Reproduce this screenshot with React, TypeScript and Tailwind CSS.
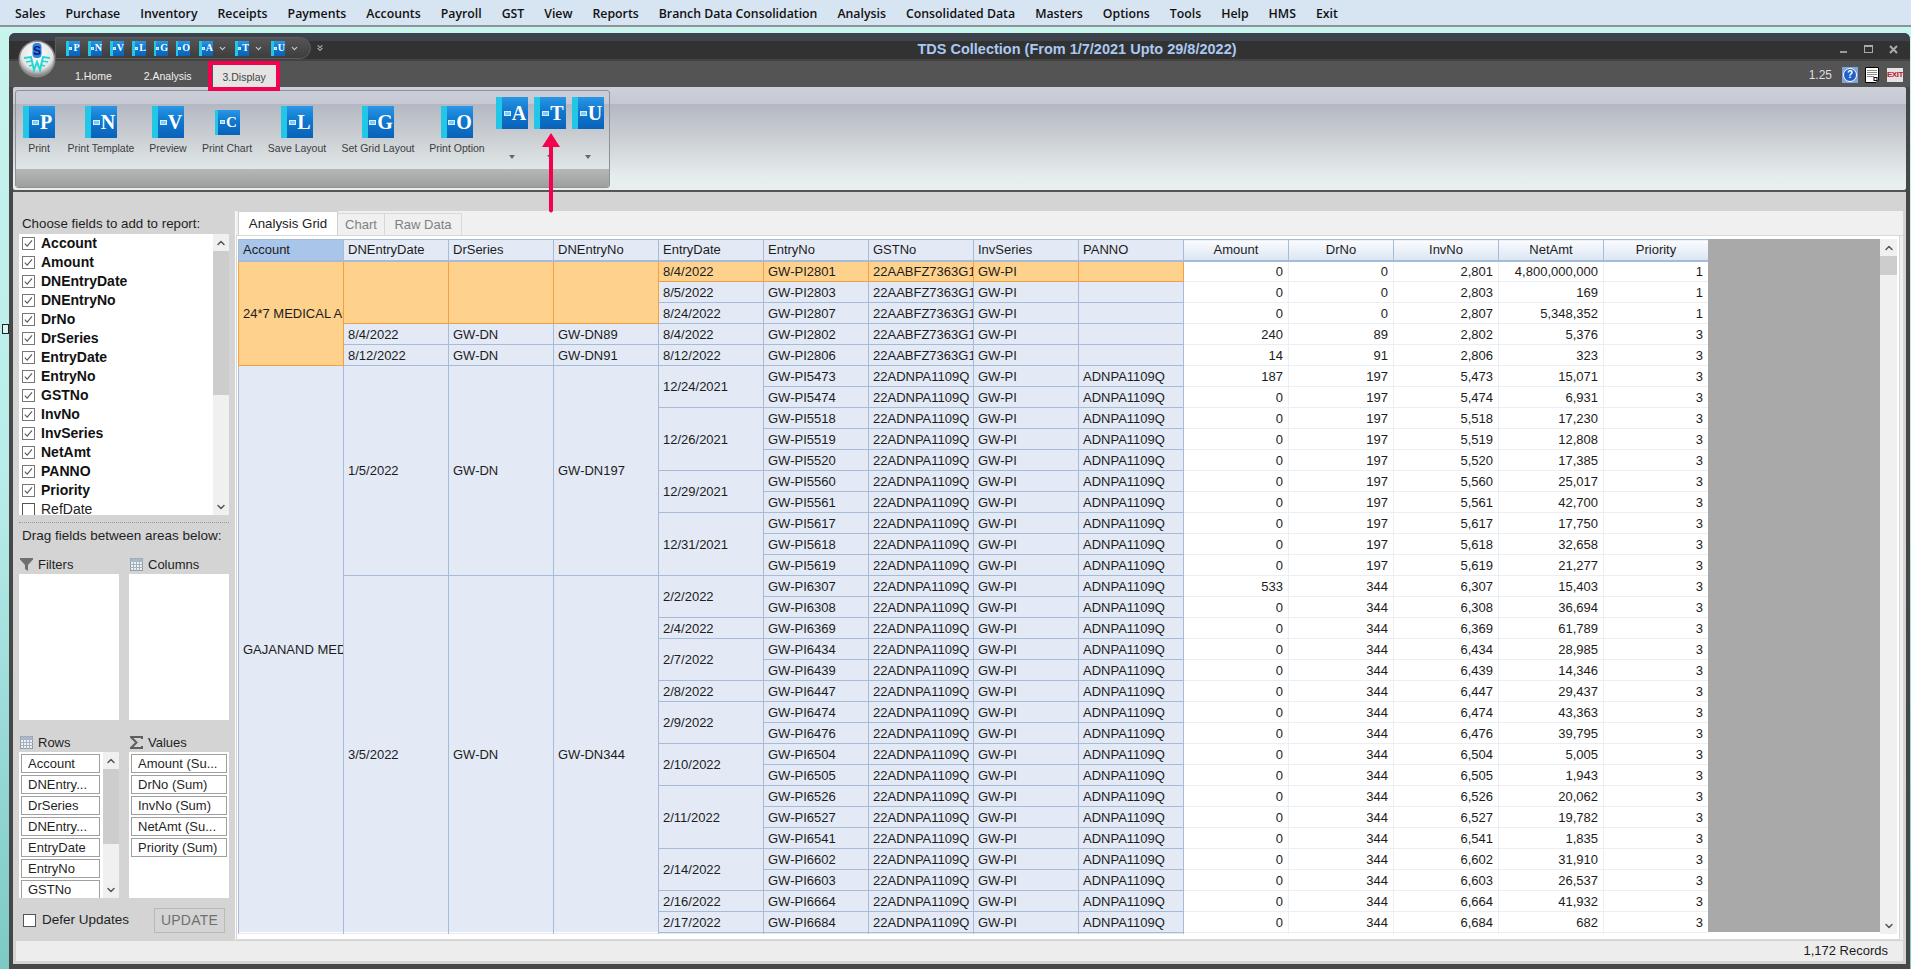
import React from "react";
import { ChevronUp, ChevronDown, ChevronsDown } from "lucide-react";

const menu = ["Sales","Purchase","Inventory","Receipts","Payments","Accounts","Payroll","GST","View","Reports","Branch Data Consolidation","Analysis","Consolidated Data","Masters","Options","Tools","Help","HMS","Exit"];

const fields: [string, boolean][] = [["Account",true],["Amount",true],["DNEntryDate",true],["DNEntryNo",true],["DrNo",true],["DrSeries",true],["EntryDate",true],["EntryNo",true],["GSTNo",true],["InvNo",true],["InvSeries",true],["NetAmt",true],["PANNO",true],["Priority",true],["RefDate",false]];

const rowFields = ["Account","DNEntry...","DrSeries","DNEntry...","EntryDate","EntryNo","GSTNo"];
const valueFields = ["Amount (Su...","DrNo (Sum)","InvNo (Sum)","NetAmt (Su...","Priority (Sum)"];

const rows: string[][] = [
["GW-PI2801","0","0","2,801","4,800,000,000"],
["GW-PI2803","0","0","2,803","169"],
["GW-PI2807","0","0","2,807","5,348,352"],
["GW-PI2802","240","89","2,802","5,376"],
["GW-PI2806","14","91","2,806","323"],
["GW-PI5473","187","197","5,473","15,071"],
["GW-PI5474","0","197","5,474","6,931"],
["GW-PI5518","0","197","5,518","17,230"],
["GW-PI5519","0","197","5,519","12,808"],
["GW-PI5520","0","197","5,520","17,385"],
["GW-PI5560","0","197","5,560","25,017"],
["GW-PI5561","0","197","5,561","42,700"],
["GW-PI5617","0","197","5,617","17,750"],
["GW-PI5618","0","197","5,618","32,658"],
["GW-PI5619","0","197","5,619","21,277"],
["GW-PI6307","533","344","6,307","15,403"],
["GW-PI6308","0","344","6,308","36,694"],
["GW-PI6369","0","344","6,369","61,789"],
["GW-PI6434","0","344","6,434","28,985"],
["GW-PI6439","0","344","6,439","14,346"],
["GW-PI6447","0","344","6,447","29,437"],
["GW-PI6474","0","344","6,474","43,363"],
["GW-PI6476","0","344","6,476","39,795"],
["GW-PI6504","0","344","6,504","5,005"],
["GW-PI6505","0","344","6,505","1,943"],
["GW-PI6526","0","344","6,526","20,062"],
["GW-PI6527","0","344","6,527","19,782"],
["GW-PI6541","0","344","6,541","1,835"],
["GW-PI6602","0","344","6,602","31,910"],
["GW-PI6603","0","344","6,603","26,537"],
["GW-PI6664","0","344","6,664","41,932"],
["GW-PI6684","0","344","6,684","682"],
];

const entryDates: Record<number, [string, number]> = {
  0:["8/4/2022",1],1:["8/5/2022",1],2:["8/24/2022",1],3:["8/4/2022",1],4:["8/12/2022",1],
  5:["12/24/2021",2],7:["12/26/2021",3],10:["12/29/2021",2],12:["12/31/2021",3],
  15:["2/2/2022",2],17:["2/4/2022",1],18:["2/7/2022",2],20:["2/8/2022",1],21:["2/9/2022",2],
  23:["2/10/2022",2],25:["2/11/2022",3],28:["2/14/2022",2],30:["2/16/2022",1],31:["2/17/2022",1],
};

const cellBase = "border border-[#a6bcd6] bg-[#e3eaf6] pl-[4px] pr-0 py-0 overflow-hidden whitespace-nowrap text-[#1c1c1c]";
const orangeCell = "border border-[#f3a044] bg-[#fed28c] pl-[4px] pr-0 py-0 overflow-hidden whitespace-nowrap text-[#1c1c1c]";
const valueCell = "border border-[#ebeef3] bg-white pl-0 pr-[5px] py-0 text-right overflow-hidden whitespace-nowrap text-[#1c1c1c]";

function Book({ letter, size }: { letter: string; size: "qat" | "big" | "mid" | "small" }) {
  const box = size === "qat" ? "w-[14px] h-[15px]" : size === "mid" ? "w-[25px] h-[25px]" : "w-[32px] h-[32px]";
  const spine = size === "qat" ? "w-[3px]" : size === "mid" ? "w-[3px]" : "w-[6px]";
  const sq = size === "qat" ? "w-[3px] h-[3px]" : size === "mid" ? "w-[5px] h-[4px]" : "w-[7px] h-[5px]";
  const txt = size === "qat" ? "text-[10px]" : size === "mid" ? "text-[15px]" : "text-[20px]";
  return (
    <div className={`flex shrink-0 ${box}`}>
      <div className={`${spine} bg-[#22c6e6]`} />
      <div className="flex-1 flex items-center justify-center gap-px bg-[linear-gradient(180deg,#2a96e4_0%,#0f78d0_45%,#0a62b8_100%)]">
        <span className={`${sq} bg-[#7cc8f4] border border-[#d6eefc]`} />
        <span className={`font-['Liberation_Serif',serif] font-bold leading-none text-white ${txt}`}>{letter}</span>
      </div>
    </div>
  );
}

function BigBtn({ letter, label, w, mid }: { letter: string; label: string; w: string; mid?: boolean }) {
  return (
    <div className={`flex flex-col items-center pt-[15px] shrink-0 ${w}`}>
      <div className="h-[32px] flex items-center">
        <Book letter={letter} size={mid ? "mid" : "big"} />
      </div>
      <div className="mt-[3px] h-[14px] leading-[14px] text-[10.5px] text-[#3d3d3d] whitespace-nowrap">{label}</div>
    </div>
  );
}

function SmallBtn({ letter }: { letter: string }) {
  return (
    <div className="flex flex-col items-center pt-[6px] w-[32px] shrink-0">
      <Book letter={letter} size="small" />
      <div className="mt-[26px] w-0 h-0 border-l-[3px] border-r-[3px] border-t-[4px] border-l-transparent border-r-transparent border-t-[#666]" />
    </div>
  );
}

function Check({ on }: { on: boolean }) {
  return (
    <svg width="13" height="13" viewBox="0 0 13 13" className="shrink-0">
      <rect x="0.5" y="0.5" width="12" height="12" fill="#fff" stroke={on ? "#777" : "#555"} />
      {on && <path d="M2.8 6.6 L5.2 9.2 L10 3.4" fill="none" stroke="#5a5a5a" strokeWidth="1.1" />}
    </svg>
  );
}

function GridIcon() {
  return (
    <svg width="13" height="13" viewBox="0 0 13 13" className="shrink-0">
      <rect x="0.5" y="0.5" width="12" height="12" fill="#eef1f6" stroke="#8e9aa8" />
      <path d="M0 3.5H13M0 6.5H13M0 9.5H13M3.5 0V13M6.5 0V13M9.5 0V13" stroke="#a5b0bd" strokeWidth="1" />
      <rect x="0.5" y="0.5" width="12" height="3" fill="#aab7c6" />
    </svg>
  );
}

function Logo() {
  return (
    <svg width="38" height="38" viewBox="0 0 38 38" className="absolute left-[9px] top-[7px] z-10">
      <defs>
        <radialGradient id="rim" cx="50%" cy="35%" r="65%">
          <stop offset="0%" stopColor="#ffffff" />
          <stop offset="70%" stopColor="#e6e6e6" />
          <stop offset="100%" stopColor="#7e7e7e" />
        </radialGradient>
      </defs>
      <circle cx="19" cy="19" r="18.5" fill="#8a8a8a" />
      <circle cx="19" cy="19" r="17" fill="url(#rim)" />
      <path d="M6 18 L13 17 L16 30 L19 22 L22 30 L25 17 L32 18" fill="none" stroke="#22d8d2" strokeWidth="2" />
      <path d="M8 22 L14 21 M30 22 L24 21 M11 26 L15 25 M27 26 L23 25" stroke="#22d8d2" strokeWidth="1.4" />
      <rect x="14.5" y="3" width="9" height="15" rx="4" fill="#2f7fe0" />
      <text x="19" y="15" textAnchor="middle" fontSize="12" fontWeight="700" fill="#0b1a6e" fontFamily="Liberation Sans">S</text>
    </svg>
  );
}

function HelpIcon() {
  return (
    <div className="w-[16px] h-[16px] bg-[#7fa6dc] flex items-center justify-center shrink-0">
      <div className="w-[14px] h-[14px] rounded-full bg-[#2060c8] border border-white flex items-center justify-center text-white text-[10px] font-bold leading-none">?</div>
    </div>
  );
}

function DocIcon() {
  return (
    <svg width="14" height="16" viewBox="0 0 14 16" className="shrink-0">
      <path d="M0.5 0.5H13.5V13L11 15.5H0.5Z" fill="#fff" stroke="#000" />
      <path d="M2 3.5H12M2 5.5H12M2 7.5H12M2 9.5H9" stroke="#8a8a8a" />
      <rect x="9" y="10.5" width="3" height="3" fill="#fff" stroke="#000" />
    </svg>
  );
}

function Scroll({ w, thumb }: { w: string; thumb: string }) {
  return (
    <div className={`${w} shrink-0 bg-[#f0f0f0] flex flex-col items-center`}>
      <div className="h-[17px] flex items-center justify-center text-[#555]"><ChevronUp size={12} strokeWidth={3} /></div>
      <div className={`w-full bg-[#cdcdcd] ${thumb}`} />
      <div className="flex-1" />
      <div className="h-[17px] flex items-center justify-center text-[#555]"><ChevronDown size={12} strokeWidth={3} /></div>
    </div>
  );
}

export default function App() {
  return (
    <div className="relative w-[1911px] h-[969px] overflow-hidden flex flex-col font-['Liberation_Sans',Arial,sans-serif] text-[13px] bg-[linear-gradient(180deg,#c9f5ee_0%,#b8ecea_50%,#7cc9c6_100%)]">
      {/* Menu bar */}
      <div className="h-[27px] shrink-0 bg-[#d7e4f2] border-b-2 border-[#8f9397] flex items-center pl-[15px] pt-[3px] gap-[20px] font-['Open_Sans',sans-serif] font-semibold text-[12.3px] text-[#111] whitespace-nowrap">
        {menu.map((m) => <span key={m}>{m}</span>)}
      </div>

      {/* Window */}
      <div className="flex-1 min-h-0 mt-[6px] ml-[9px] mr-[1px] flex flex-col rounded-t-[6px] bg-[#474747] relative">
        <Logo />
        {/* Title bar */}
        <div className="h-[28px] shrink-0 rounded-t-[6px] flex items-center bg-[linear-gradient(180deg,#3d434d_0,#3d434d_8px,#323232_8px,#323232_26px,#434343_26px)]">
          <div className="ml-[46px] w-[256px] h-[22px] mt-[2px] rounded-r-full bg-[linear-gradient(180deg,#555_0%,#3d3d3d_100%)] border border-[#5c5c5c] flex items-center pl-[10px]">
            <div className="flex items-center gap-[8px]">
              {["P","N","V","L","G","O"].map((l) => <Book key={l} letter={l} size="qat" />)}
            </div>
            <div className="flex items-center ml-[9px]"><Book letter="A" size="qat" /><ChevronDown size={9} strokeWidth={3} className="text-[#ccc] ml-[5px]" /></div>
            <div className="flex items-center ml-[8px]"><Book letter="T" size="qat" /><ChevronDown size={9} strokeWidth={3} className="text-[#ccc] ml-[5px]" /></div>
            <div className="flex items-center ml-[8px]"><Book letter="U" size="qat" /><ChevronDown size={9} strokeWidth={3} className="text-[#ccc] ml-[5px]" /></div>
          </div>
          <ChevronsDown size={10} strokeWidth={2.5} className="text-[#bbb] ml-[4px] mt-[2px]" />
          <div className="ml-[592px] w-[320px] text-center whitespace-nowrap text-[14.5px] font-bold text-[#a9c9f2] mt-[5px]">TDS Collection (From 1/7/2021 Upto 29/8/2022)</div>
          <div className="ml-auto pr-[12px] mt-[4px] flex items-center text-[#aaa]">
            <div className="w-[7px] h-[2px] bg-[#999] mt-[6px]" />
            <div className="ml-[17px] w-[9px] h-[8px] border border-t-2 border-[#aaa]" />
            <svg width="9" height="9" viewBox="0 0 9 9" className="ml-[16px]"><path d="M1 1L8 8M8 1L1 8" stroke="#aaa" strokeWidth="2" /></svg>
          </div>
        </div>

        {/* Tab row */}
        <div className="h-[26px] shrink-0 bg-[#545454] flex items-end text-[10.5px] text-[#efefef] pr-[7px]">
          <span className="ml-[66px] mb-[2px]">1.Home</span>
          <span className="ml-[32px] mb-[2px]">2.Analysis</span>
          <div className="relative ml-[21px] w-[63px] h-[22px] bg-[#e4e4e4] text-[#444] flex items-center justify-center pt-[3px]">
            3.Display
            <div className="absolute -left-[5px] -right-[4px] -top-[4px] -bottom-[4px] border-[4px] border-[#f5004f] z-10" />
          </div>
          <div className="ml-auto flex items-center gap-[7px] mb-[3px]">
            <span className="text-[12px] text-[#dfdfdf] mr-[3px]">1.25</span>
            <HelpIcon />
            <DocIcon />
            <div className="ml-[1px] w-[16px] h-[14px] bg-[#e6e2e2] flex items-center justify-center text-[#b5202a] text-[8px] font-bold leading-none tracking-tighter">EXIT</div>
          </div>
        </div>

        {/* Ribbon */}
        <div className="h-[103px] shrink-0 mx-[4px] rounded-[2px] bg-[linear-gradient(180deg,#cdd0d9_0,#c6c9d3_17px,#b3b7c2_17px,#c7cbd0_45px,#e6eded_90px,#e8efef_100%)] pl-[2px] pt-[3px]">
          <div className="w-[595px] h-[98px] border border-[#8e9196] rounded-[3px] flex flex-col overflow-hidden">
            <div className="h-[78px] flex pl-[3px] shrink-0">
              <BigBtn letter="P" label="Print" w="w-[40px]" />
              <BigBtn letter="N" label="Print Template" w="w-[84px]" />
              <BigBtn letter="V" label="Preview" w="w-[50px]" />
              <BigBtn letter="C" label="Print Chart" w="w-[68px]" mid />
              <BigBtn letter="L" label="Save Layout" w="w-[72px]" />
              <BigBtn letter="G" label="Set Grid Layout" w="w-[90px]" />
              <BigBtn letter="O" label="Print Option" w="w-[68px]" />
              <div className="flex gap-[6px] ml-[5px]">
                <SmallBtn letter="A" />
                <SmallBtn letter="T" />
                <SmallBtn letter="U" />
              </div>
            </div>
            <div className="flex-1 bg-[linear-gradient(180deg,#b6b8b7_0%,#9d9f9e_100%)]" />
          </div>
        </div>
        <div className="h-[2px] shrink-0 mx-[4px] bg-[#555]" />

        {/* Content */}
        <div className="h-[772px] shrink-0 mx-[4px] bg-[#d4d4d4] flex flex-col">
          <div className="h-[749px] shrink-0 flex">
            {/* Field panel */}
            <div className="w-[222px] shrink-0 pl-[6px] pr-[6px] pt-[24px] flex flex-col text-[#1f1f1f]">
              <div className="h-[18px] leading-[16px] pl-[3px] text-[13.3px] whitespace-nowrap">Choose fields to add to report:</div>
              <div className="h-[281px] bg-white flex overflow-hidden">
                <div className="flex-1 overflow-hidden">
                  {fields.map(([f, on]) => (
                    <div key={f} className="h-[19px] flex items-center pl-[3px] gap-[6px]">
                      <Check on={on} />
                      <span className={on ? "font-bold text-[14px] text-[#111]" : "text-[14px] text-[#222]"}>{f}</span>
                    </div>
                  ))}
                </div>
                <Scroll w="w-[16px]" thumb="h-[144px]" />
              </div>
              <div className="h-[8px] border-b border-dotted border-[#9a9a9a]" />
              <div className="h-[18px] mt-[4px] leading-[18px] pl-[3px] text-[13.5px] whitespace-nowrap">Drag fields between areas below:</div>
              <div className="grid grid-cols-[100px_100px] gap-x-[10px] mt-[10px]">
                <div className="h-[19px] flex items-center gap-[5px] pl-[1px] text-[13px]">
                  <svg width="13" height="13" viewBox="0 0 13 13" className="shrink-0"><path d="M0 0H13V1.5L8 7V13L5 11V7L0 1.5Z" fill="#6f6f6f" /></svg>
                  Filters
                </div>
                <div className="h-[19px] flex items-center gap-[5px] pl-[1px] text-[13px]"><GridIcon />Columns</div>
                <div className="h-[146px] bg-white" />
                <div className="h-[146px] bg-white" />
                <div className="h-[19px] mt-[13px] flex items-center gap-[5px] pl-[1px] text-[13px]"><GridIcon />Rows</div>
                <div className="h-[19px] mt-[13px] flex items-center gap-[5px] pl-[1px] text-[13px]">
                  <svg width="13" height="13" viewBox="0 0 13 13" className="shrink-0"><path d="M12 3V1H1L6.5 6.5L1 12H12V10" fill="none" stroke="#5f5f5f" strokeWidth="2" /></svg>
                  Values
                </div>
                <div className="h-[146px] bg-white flex overflow-hidden">
                  <div className="w-[84px] pl-[2px] pt-[2px] flex flex-col gap-[2px]">
                    {rowFields.map((f, i) => (
                      <div key={i} className="w-[79px] h-[19px] shrink-0 border border-[#a0a0a0] pl-[6px] leading-[17px] whitespace-nowrap overflow-hidden">{f}</div>
                    ))}
                  </div>
                  <Scroll w="w-[16px]" thumb="h-[75px]" />
                </div>
                <div className="h-[146px] bg-white pl-[2px] pt-[2px] flex flex-col gap-[2px]">
                  {valueFields.map((f) => (
                    <div key={f} className="w-[96px] h-[19px] shrink-0 border border-[#a0a0a0] pl-[6px] leading-[17px] whitespace-nowrap overflow-hidden">{f}</div>
                  ))}
                </div>
              </div>
              <div className="h-[25px] mt-[10px] flex items-center pl-[4px]">
                <Check on={false} />
                <span className="ml-[6px] text-[13.5px] -mt-[1px]">Defer Updates</span>
                <div className="ml-auto mr-[4px] w-[71px] h-[25px] border border-[#b9b9b9] flex items-center justify-center text-[#707070] text-[14px] tracking-[0.2px]">UPDATE</div>
              </div>
            </div>

            {/* Grid panel */}
            <div className="flex-1 min-w-0 mt-[19px] mb-[1px] mr-[3px] bg-[#f0f0f0] flex flex-col border-l border-[#fafafa]">
              <div className="h-[25px] shrink-0 flex items-end pl-[2px] border-b border-[#d8d8d8]">
                <div className="w-[100px] h-[24px] bg-white border border-b-0 border-[#d0d0d0] flex items-center justify-center text-[13.3px] text-[#222]">Analysis Grid</div>
                <div className="w-[47px] h-[22px] border-r border-t border-[#d8d8d8] flex items-center justify-center text-[#808080]">Chart</div>
                <div className="w-[77px] h-[22px] border-r border-t border-[#d8d8d8] flex items-center justify-center text-[#808080]">Raw Data</div>
              </div>
              <div className="flex-1 min-h-0 mr-[3px] bg-white border-b border-r border-l border-[#d8d8d8] pl-[1px] pr-[2px] pt-[3px] pb-[4px] flex">
                <div className="w-[1470px] shrink-0 h-[695px] overflow-hidden">
                  <table className="table-fixed w-[1470px] text-[13px] leading-none border-collapse">
                    <colgroup>
                      {Array.from({ length: 14 }).map((_, i) => <col key={i} className="w-[105px]" />)}
                    </colgroup>
                    <thead>
                      <tr className="h-[21px]">
                        <th className="font-normal text-left pl-[4px] bg-[#a9c5e9] border border-[#a6bcd6] border-b-2 text-[#1c1c1c]">Account</th>
                        {["DNEntryDate","DrSeries","DNEntryNo","EntryDate","EntryNo","GSTNo","InvSeries","PANNO"].map((h) => (
                          <th key={h} className="font-normal text-left pl-[4px] bg-[#e3eaf6] border border-[#a6bcd6] border-b-2 text-[#1c1c1c]">{h}</th>
                        ))}
                        {["Amount","DrNo","InvNo","NetAmt","Priority"].map((h) => (
                          <th key={h} className="font-normal text-center bg-[linear-gradient(180deg,#fbfcfe_0%,#dbe5f3_100%)] border border-[#a6bcd6] border-b-2 text-[#1c1c1c]">{h}</th>
                        ))}
                      </tr>
                    </thead>
                    <tbody>
                      {rows.map((r, i) => {
                        const sel = i === 0;
                        const c = sel ? orangeCell : cellBase;
                        const gst = i < 5 ? "22AABFZ7363G1" : "22ADNPA1109Q";
                        const pan = i < 5 ? "" : "ADNPA1109Q";
                        const ed = entryDates[i];
                        return (
                          <tr key={i} className="h-[21px]">
                            {i === 0 && <td rowSpan={5} className={orangeCell}>24*7 MEDICAL AGENCIES</td>}
                            {i === 5 && <td rowSpan={27} className={`${cellBase} border-b-transparent`}>GAJANAND MEDICAL</td>}
                            {i === 0 && <><td rowSpan={3} className={orangeCell} /><td rowSpan={3} className={orangeCell} /><td rowSpan={3} className={orangeCell} /></>}
                            {i === 3 && <><td className={cellBase}>8/4/2022</td><td className={cellBase}>GW-DN</td><td className={cellBase}>GW-DN89</td></>}
                            {i === 4 && <><td className={cellBase}>8/12/2022</td><td className={cellBase}>GW-DN</td><td className={cellBase}>GW-DN91</td></>}
                            {i === 5 && <><td rowSpan={10} className={cellBase}>1/5/2022</td><td rowSpan={10} className={cellBase}>GW-DN</td><td rowSpan={10} className={cellBase}>GW-DN197</td></>}
                            {i === 15 && <><td rowSpan={17} className={`${cellBase} border-b-transparent`}>3/5/2022</td><td rowSpan={17} className={`${cellBase} border-b-transparent`}>GW-DN</td><td rowSpan={17} className={`${cellBase} border-b-transparent`}>GW-DN344</td></>}
                            {ed && <td rowSpan={ed[1]} className={c}>{ed[0]}</td>}
                            <td className={c}>{r[0]}</td>
                            <td className={c}>{gst}</td>
                            <td className={c}>GW-PI</td>
                            <td className={c}>{pan}</td>
                            <td className={valueCell}>{r[1]}</td>
                            <td className={valueCell}>{r[2]}</td>
                            <td className={valueCell}>{r[3]}</td>
                            <td className={valueCell}>{r[4]}</td>
                            <td className={valueCell}>{i < 3 ? "1" : "3"}</td>
                          </tr>
                        );
                      })}
                      <tr className="h-[21px]">
                        {Array.from({ length: 9 }).map((_, i) => <td key={i} className={i < 4 ? "bg-[#e3eaf6] border-x border-[#a6bcd6]" : cellBase} />)}
                        {Array.from({ length: 5 }).map((_, i) => <td key={i} className={valueCell} />)}
                      </tr>
                    </tbody>
                  </table>
                </div>
                <div className="flex-1 h-[693px] bg-[#a9a9a9]" />
                <Scroll w="w-[17px] h-[695px]" thumb="h-[19px]" />
              </div>
            </div>
          </div>
          {/* Status bar */}
          <div className="h-[20px] shrink-0 ml-[3px] mr-[3px] bg-[#ededed] flex items-center justify-end pr-[15px] text-[13px] text-[#1c1c1c]">1,172 Records</div>
        </div>
      </div>

      {/* Resize handle on the window's left edge */}
      <div className="absolute left-[2px] top-[324px] w-[7px] h-[10px] bg-[#d8f6f0] border border-[#222]" />

      {/* Pink annotation arrow */}
      <svg width="22" height="82" viewBox="0 0 22 82" className="absolute left-[540px] top-[132px] z-20">
        <path d="M11 1 L20 15 L13 15 L13 79 Q11 82 9 79 L9 15 L2 15 Z" fill="#f5004f" />
      </svg>
    </div>
  );
}
